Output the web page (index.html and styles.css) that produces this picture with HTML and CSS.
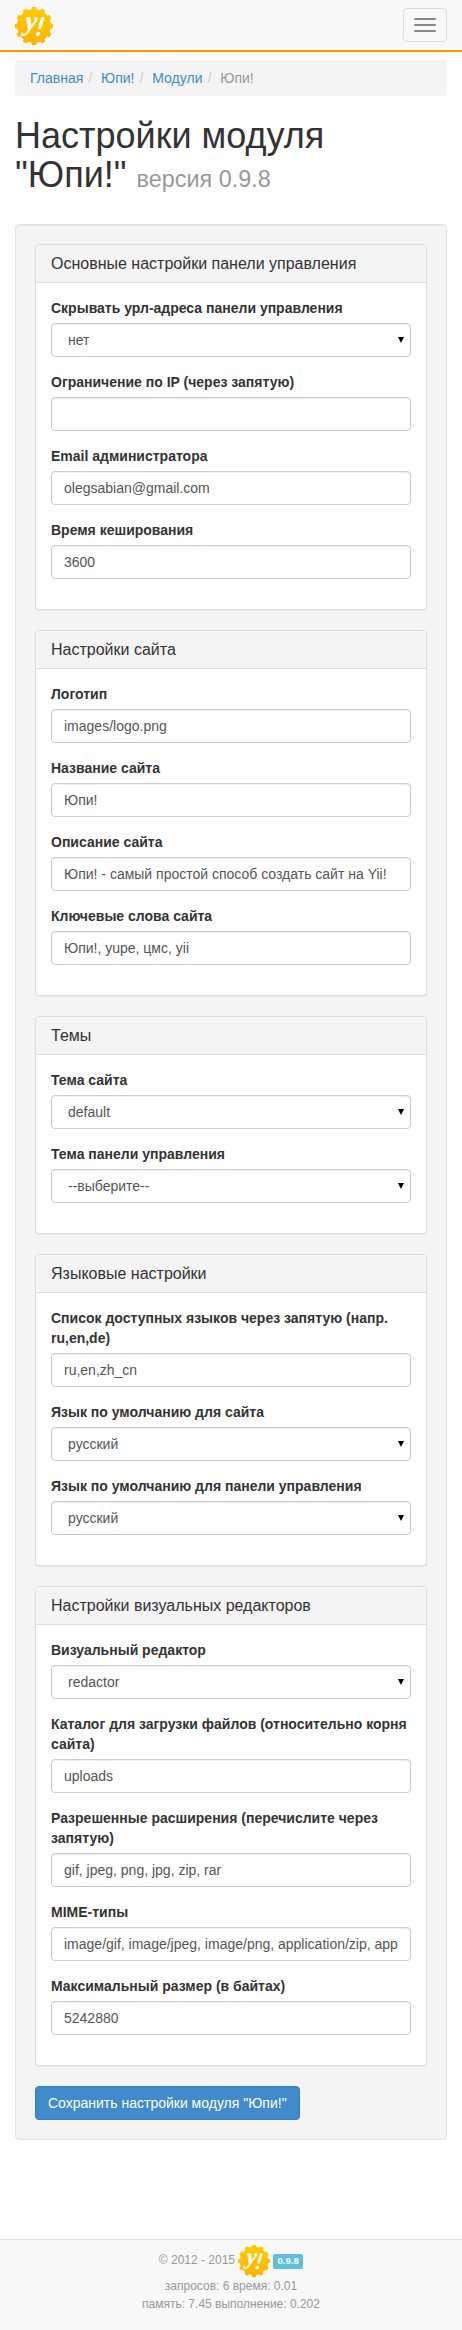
FILE: index.html
```html
<!DOCTYPE html>
<html lang="ru">
<head>
<meta charset="utf-8">
<title>Настройки модуля "Юпи!"</title>
<link rel="stylesheet" href="styles.css">
</head>
<body>
<svg class="defs" width="0" height="0" aria-hidden="true">
  <defs>
    <linearGradient id="gold" x1="0" y1="0" x2="0" y2="1"><stop offset="0" stop-color="#ffcb00"/><stop offset="1" stop-color="#fdb400"/></linearGradient>
    <mask id="gear">
      <g fill="#fff">
        <circle cx="19" cy="19" r="16.8"/>
        <rect x="16.6" y="0" width="4.8" height="38" rx="1"/>
        <rect x="16.6" y="0" width="4.8" height="38" rx="1" transform="rotate(30 19 19)"/>
        <rect x="16.6" y="0" width="4.8" height="38" rx="1" transform="rotate(60 19 19)"/>
        <rect x="16.6" y="0" width="4.8" height="38" rx="1" transform="rotate(90 19 19)"/>
        <rect x="16.6" y="0" width="4.8" height="38" rx="1" transform="rotate(120 19 19)"/>
        <rect x="16.6" y="0" width="4.8" height="38" rx="1" transform="rotate(150 19 19)"/>
      </g>
    </mask>
    <symbol id="logo" viewBox="0 0 38 38">
      <rect width="38" height="38" fill="url(#gold)" mask="url(#gear)"/>
      <text class="logo-text" transform="translate(9.5 23) skewX(-6)">y</text>
      <text class="logo-mark" transform="translate(20 28.5) skewX(-10)">!</text>
    </symbol>
  </defs>
</svg>
<nav class="navbar">
  <svg class="brand"><use href="#logo"/></svg>
  <button class="toggle" type="button" aria-label="Меню"><span class="bar"></span><span class="bar"></span><span class="bar"></span></button>
</nav>
<main class="container">
  <ul class="breadcrumb"><li><a href="#">Главная</a></li><li><a href="#">Юпи!</a></li><li><a href="#">Модули</a></li><li class="active">Юпи!</li></ul>
  <h1 class="title">Настройки модуля<br>"Юпи!" <small>версия 0.9.8</small></h1>
  <form class="well">
    <section class="panel">
      <h4 class="panel-heading">Основные настройки панели управления</h4>
      <div class="panel-body">
        <div class="group"><label>Скрывать урл-адреса панели управления</label><div class="select"><select class="control"><option>нет</option></select></div></div>
        <div class="group"><label>Ограничение по IP (через запятую)</label><input class="control" type="text"></div>
        <div class="group"><label>Email администратора</label><input class="control" type="text" value="olegsabian@gmail.com"></div>
        <div class="group"><label>Время кеширования</label><input class="control" type="text" value="3600"></div>
      </div>
    </section>
    <section class="panel">
      <h4 class="panel-heading">Настройки сайта</h4>
      <div class="panel-body">
        <div class="group"><label>Логотип</label><input class="control" type="text" value="images/logo.png"></div>
        <div class="group"><label>Название сайта</label><input class="control" type="text" value="Юпи!"></div>
        <div class="group"><label>Описание сайта</label><input class="control" type="text" value="Юпи! - самый простой способ создать сайт на Yii!"></div>
        <div class="group"><label>Ключевые слова сайта</label><input class="control" type="text" value="Юпи!, yupe, цмс, yii"></div>
      </div>
    </section>
    <section class="panel">
      <h4 class="panel-heading">Темы</h4>
      <div class="panel-body">
        <div class="group"><label>Тема сайта</label><div class="select"><select class="control"><option>default</option></select></div></div>
        <div class="group"><label>Тема панели управления</label><div class="select"><select class="control"><option>--выберите--</option></select></div></div>
      </div>
    </section>
    <section class="panel">
      <h4 class="panel-heading">Языковые настройки</h4>
      <div class="panel-body">
        <div class="group"><label>Список доступных языков через запятую (напр. ru,en,de)</label><input class="control" type="text" value="ru,en,zh_cn"></div>
        <div class="group"><label>Язык по умолчанию для сайта</label><div class="select"><select class="control"><option>русский</option></select></div></div>
        <div class="group"><label>Язык по умолчанию для панели управления</label><div class="select"><select class="control"><option>русский</option></select></div></div>
      </div>
    </section>
    <section class="panel">
      <h4 class="panel-heading">Настройки визуальных редакторов</h4>
      <div class="panel-body">
        <div class="group"><label>Визуальный редактор</label><div class="select"><select class="control"><option>redactor</option></select></div></div>
        <div class="group"><label>Каталог для загрузки файлов (относительно корня сайта)</label><input class="control" type="text" value="uploads"></div>
        <div class="group"><label>Разрешенные расширения (перечислите через запятую)</label><input class="control" type="text" value="gif, jpeg, png, jpg, zip, rar"></div>
        <div class="group"><label>MIME-типы</label><input class="control" type="text" value="image/gif, image/jpeg, image/png, application/zip, app"></div>
        <div class="group"><label>Максимальный размер (в байтах)</label><input class="control" type="text" value="5242880"></div>
      </div>
    </section>
    <button class="btn" type="button">Сохранить настройки модуля "Юпи!"</button>
  </form>
</main>
<footer class="footer">
  <div class="copy"><span>© 2012 - 2015</span><svg class="foot-logo"><use href="#logo"/></svg><span class="badge">0.9.8</span></div>
  <div>запросов: 6 время: 0.01</div>
  <div>память: 7.45 выполнение: 0.202</div>
</footer>
</body>
</html>
```
FILE: styles.css
```css
* { box-sizing: border-box; }
body {
  margin: 0;
  min-height: 2330px;
  display: flex;
  flex-direction: column;
  background: #fff;
  color: #333;
  font: 14px/20px "Liberation Sans", Arial, sans-serif;
}
.defs { position: absolute; }
.logo-text { font: italic 700 27px "Liberation Serif", serif; fill: #fff; stroke: #fff; stroke-width: .4px; }
.logo-mark { font: italic 900 26px Lato, sans-serif; fill: #fff; }
.navbar {
  height: 52px;
  padding: 0 15px;
  display: flex;
  align-items: center;
  justify-content: space-between;
  background: #f8f8f8;
  border-bottom: 2px solid #ff9600;
}
.brand { width: 38px; height: 38px; margin-top: 2px; }
.toggle {
  width: 44px;
  height: 34px;
  padding: 0 10px;
  display: flex;
  flex-direction: column;
  justify-content: center;
  gap: 4px;
  background: transparent;
  border: 1px solid #ddd;
  border-radius: 4px;
}
.bar { height: 2px; border-radius: 1px; background: #888; }
.container { padding: 8px 15px 0; }
.breadcrumb {
  display: flex;
  margin: 0 0 20px;
  padding: 8px 15px;
  list-style: none;
  background: #f4f4f4;
  border-radius: 4px;
}
.breadcrumb li + li::before { content: "/\00a0"; padding: 0 5px; color: #ccc; }
.breadcrumb a { color: #428bca; text-decoration: none; }
.breadcrumb .active { color: #999; }
.title { height: 79px; margin: 0 0 29px; font-size: 36px; font-weight: 500; line-height: 39px; }
.title small { font-size: 23.4px; font-weight: 400; line-height: 1; color: #999; }
.well {
  padding: 19px;
  background: #f4f4f4;
  border: 1px solid #e3e3e3;
  border-radius: 4px;
  box-shadow: inset 0 1px 1px rgba(0, 0, 0, .05);
}
.panel {
  margin-bottom: 20px;
  background: #fff;
  border: 1px solid #ddd;
  border-radius: 4px;
  box-shadow: 0 1px 1px rgba(0, 0, 0, .05);
}
.panel-heading {
  margin: 0;
  padding: 10px 15px;
  font-size: 16px;
  font-weight: 500;
  line-height: 17px;
  background: #f4f4f4;
  border-bottom: 1px solid #ddd;
  border-radius: 3px 3px 0 0;
}
.panel-body { padding: 15px; }
.group { margin-bottom: 15px; }
.group label { display: block; margin-bottom: 5px; font-weight: 700; }
.control {
  display: block;
  width: 100%;
  height: 34px;
  margin: 0;
  padding: 6px 12px;
  appearance: none;
  font: inherit;
  color: #555;
  background: #fff;
  border: 1px solid #ccc;
  border-radius: 4px;
  box-shadow: inset 0 1px 1px rgba(0, 0, 0, .075);
}
.select { position: relative; }
.select .control { padding-left: 16px; }
.select::after {
  content: "";
  position: absolute;
  top: 14px;
  right: 7px;
  width: 6px;
  height: 6px;
  background: #000;
  clip-path: polygon(0 0, 100% 0, 50% 100%);
}
.btn {
  display: block;
  height: 34px;
  padding: 6px 12px;
  font: inherit;
  color: #fff;
  background: #428bca;
  border: 1px solid #357ebd;
  border-radius: 4px;
}
.footer {
  margin-top: auto;
  height: 91px;
  padding-top: 5px;
  text-align: center;
  font-size: 12px;
  line-height: 18px;
  color: #999;
  background: #f8f8f8;
  border-top: 1px solid #e3e3e3;
}
.copy { display: flex; justify-content: center; height: 32px; }
.copy span:first-child { padding-top: 6px; }
.foot-logo { width: 32px; height: 32px; margin: 0 3px; }
.badge {
  height: 15px;
  margin-top: 9px;
  padding: 0 4.5px;
  font-size: 9.5px;
  font-weight: 700;
  line-height: 14px;
  color: #fff;
  background: #5bc0de;
  border-radius: 2px;
}
```
